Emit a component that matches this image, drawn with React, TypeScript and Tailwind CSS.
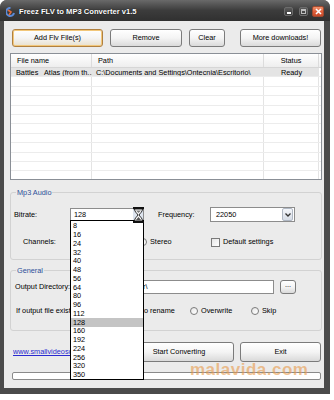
import React from "react";

const btn =
  "flex items-center justify-center rounded-[3px] border border-[#7b7b7b] bg-gradient-to-b from-[#ffffff] via-[#f4f4f4] to-[#dadada] text-black shrink-0";

const bitrates = ["8", "16", "24", "32", "40", "48", "56", "64", "80", "96", "112", "128", "160", "192", "224", "256", "320", "350"];

function Radio() {
  return <span className="w-[8px] h-[8px] rounded-full border border-[#7a7a7a] bg-gradient-to-br from-[#e8e8e8] to-white shrink-0" />;
}

function TitleBar() {
  return (
    <div className="h-[21px] flex items-center bg-gradient-to-b from-[#6a6a6a] via-[#3c3c3c] to-[#303030] shrink-0">
      <svg width="9" height="10" viewBox="0 0 9 10" className="ml-[6px] mt-[2px] shrink-0">
        <path d="M4.5 1 A4 4 0 1 0 8 6" fill="none" stroke="#5b8ad8" strokeWidth="2" />
        <path d="M2 3 L5 5 L3 8" fill="none" stroke="#e06a3a" strokeWidth="1.6" />
      </svg>
      <span className="ml-[4px] mt-[2px] text-white font-bold text-[7.6px] [text-shadow:0_0_1px_#000]">
        Freez FLV to MP3 Converter v1.5
      </span>
      <div className="ml-auto mr-[6px] mt-[1px] flex items-center">
        <div className="w-[9px] h-[9px] rounded-[2px] border border-[#6c6c6c] bg-gradient-to-b from-[#5a5a5a] to-[#3a3a3a] flex items-end justify-center pb-[1px]">
          <span className="w-[4px] h-[2px] bg-white" />
        </div>
        <div className="ml-[6px] w-[9px] h-[9px] rounded-[2px] border border-[#6c6c6c] bg-gradient-to-b from-[#5a5a5a] to-[#3a3a3a] flex items-center justify-center">
          <span className="w-[5px] h-[5px] border border-[#bdbdbd] border-t-2" />
        </div>
        <div className="ml-[4px] w-[12px] h-[11px] rounded-[2px] border border-[#a04a30] bg-gradient-to-b from-[#f0906a] via-[#e0603c] to-[#c84a2a] flex items-center justify-center">
          <svg width="7" height="7" viewBox="0 0 7 7">
            <path d="M1 1 L6 6 M6 1 L1 6" stroke="white" strokeWidth="1.6" />
          </svg>
        </div>
      </div>
    </div>
  );
}

function FileList() {
  const rows = Array.from({ length: 11 });
  return (
    <div className="mt-[6px] ml-[6px] w-[312px] h-[127px] border border-[#8a8f96] bg-white overflow-hidden flex flex-col shrink-0">
      <div className="h-[14px] flex items-stretch bg-gradient-to-b from-white to-[#eeeeee] border-b border-[#d6d6d6] shrink-0">
        <div className="w-[81px] flex items-center pl-[6px] border-r border-[#dcdcdc]">File name</div>
        <div className="w-[172px] flex items-center pl-[6px] border-r border-[#dcdcdc]">Path</div>
        <div className="w-[55px] flex items-center justify-center border-r border-[#dcdcdc]">Status</div>
        <div className="flex-1" />
      </div>
      <div className="h-[9.4px] flex items-stretch bg-[#e4e4e4] border-b border-[#ececec] shrink-0">
        <div className="w-[81px] flex items-center pl-[5px] whitespace-nowrap overflow-hidden">Battles&nbsp;&nbsp; Atlas (from th...</div>
        <div className="w-[172px] flex items-center pl-[4px] whitespace-nowrap overflow-hidden">C:\Documents and Settings\Ontecnia\Escritorio\</div>
        <div className="w-[55px] flex items-center justify-center">Ready</div>
        <div className="flex-1 bg-white" />
      </div>
      {rows.map((_, i) => (
        <div key={i} className="h-[9.4px] flex items-stretch border-b border-[#ececec] shrink-0">
          <div className="w-[81px] border-r border-[#e4e4e4]" />
          <div className="w-[172px] border-r border-[#e4e4e4]" />
          <div className="w-[55px] border-r border-[#e4e4e4]" />
          <div className="flex-1" />
        </div>
      ))}
    </div>
  );
}

export default function App() {
  return (
    <div className="w-[334px] h-[400px] bg-white font-['Liberation_Sans',Arial,sans-serif] text-[7.3px] leading-none text-black">
      <div className="w-[330px] h-[394px] rounded-t-[7px] bg-[#4b4b4b] flex flex-col overflow-hidden">
        <TitleBar />
        <div className="relative ml-[4px] w-[320px] h-[367px] bg-[#ebebeb] flex flex-col">
          {/* top buttons */}
          <div className="mt-[8px] ml-[8px] flex h-[18px] shrink-0">
            <button className={btn + " w-[91px] border-[#b08040] from-[#fffaf0] to-[#e8e0cc] shadow-[inset_0_0_0_1px_#f2c77a]"}>Add Flv File(s)</button>
            <button className={btn + " ml-[7px] w-[72px]"}>Remove</button>
            <button className={btn + " ml-[7px] w-[36px]"}>Clear</button>
            <button className={btn + " ml-[15px] w-[81px]"}>More downloads!</button>
          </div>

          <FileList />

          {/* Mp3 Audio group */}
          <div className="relative mt-[12px] ml-[6px] w-[312px] h-[68px] border border-[#d2d2d2] rounded-[3px] shrink-0">
            <span className="absolute left-[5px] top-[-5px] px-[1px] bg-[#ebebeb] text-[#2c4f98] leading-[9px]">Mp3 Audio</span>
            <div className="mt-[14px] h-[15px] flex items-center">
              <span className="ml-[3px] w-[56px]">Bitrate:</span>
              <div className="w-[74px] h-[13px] border border-[#8c8c8c] bg-white flex items-center">
                <span className="ml-[3px] flex-1">128</span>
                <span className="w-[10px] h-full bg-[#dde4ee]" />
              </div>
              <span className="ml-[14px] w-[52px]">Frequency:</span>
              <div className="w-[85px] h-[15px] border border-[#8c8c8c] bg-white flex items-center">
                <span className="ml-[5px] flex-1">22050</span>
                <span className="w-[11px] h-[13px] mr-[1px] rounded-[2px] border border-[#b0b8c4] bg-gradient-to-b from-[#f4f6fa] to-[#d6dce6] flex items-center justify-center">
                  <svg width="6" height="4" viewBox="0 0 6 4">
                    <path d="M0.5 0.5 L3 3 L5.5 0.5" fill="none" stroke="#333" strokeWidth="1.3" />
                  </svg>
                </span>
              </div>
            </div>
            <div className="mt-[14px] h-[12px] flex items-center">
              <span className="ml-[12px] w-[68px]">Channels:</span>
              <Radio />
              <span className="ml-[3px] w-[37px]">Mono</span>
              <Radio />
              <span className="ml-[3px] w-[61px]">Stereo</span>
              <span className="w-[9px] h-[9px] border border-[#7a7a7a] bg-gradient-to-br from-[#e6e6e6] to-white shrink-0" />
              <span className="ml-[3px]">Default settings</span>
            </div>
          </div>

          {/* General group */}
          <div className="relative mt-[10px] ml-[6px] w-[312px] h-[61px] border border-[#d2d2d2] rounded-[3px] shrink-0">
            <span className="absolute left-[5px] top-[-5px] px-[1px] bg-[#ebebeb] text-[#2c4f98] leading-[9px]">General</span>
            <div className="mt-[8px] h-[15px] flex items-center">
              <span className="ml-[4px] w-[79px] whitespace-nowrap">Output Directory:</span>
              <div className="w-[180px] h-[14px] border border-[#8c8c8c] bg-white flex items-center overflow-hidden">
                <span className="ml-[0.5px] whitespace-nowrap">C:\Temp\Folder\</span>
              </div>
              <button className={btn + " ml-[6px] w-[16px] h-[14px] rounded-[2px] pb-[3px]"}>...</button>
            </div>
            <div className="mt-[11px] h-[12px] flex items-center">
              <span className="ml-[5px] w-[105px]">If output file exists:</span>
              <Radio />
              <span className="ml-[4px] w-[57px]">Auto rename</span>
              <Radio />
              <span className="ml-[3px] w-[50px]">Overwrite</span>
              <Radio />
              <span className="ml-[3px]">Skip</span>
            </div>
          </div>

          {/* bottom */}
          <div className="mt-[11px] h-[20px] flex items-center shrink-0">
            <span className="ml-[9px] w-[111px] text-[#2a2ad0] underline whitespace-nowrap overflow-hidden">www.smallvideosoft.com</span>
            <button className={btn + " w-[110px] h-[20px]"}>Start Converting</button>
            <button className={btn + " ml-[6px] w-[81px] h-[20px]"}>Exit</button>
          </div>
          <div className="mt-[10px] ml-[8px] w-[309px] h-[8px] rounded-[2px] border border-[#8a8a8a] bg-white shrink-0" />

          {/* watermark */}
          <span className="absolute left-[186px] top-[340px] text-[17px] font-bold tracking-[0.5px] text-[#e89a4a]/60 leading-none pointer-events-none">
            malavida.com
          </span>

          {/* dropdown list */}
          <div className="absolute left-[66px] top-[199px] w-[74px] h-[160px] border border-black bg-white flex flex-col pt-[0.6px]">
            {bitrates.map((b) => (
              <div
                key={b}
                className={"h-[8.76px] flex items-center pl-[2px] " + (b === "128" ? "bg-[#c4c4c4]" : "")}
              >
                {b}
              </div>
            ))}
          </div>

          {/* hourglass cursor */}
          <svg className="absolute left-[129px] top-[186px]" width="11" height="16" viewBox="0 0 11 16">
            <rect x="0" y="0" width="11" height="2.2" fill="#111" />
            <rect x="0" y="13.8" width="11" height="2.2" fill="#111" />
            <path d="M1.5 2 L9.5 2 C9.5 5 6.5 6.6 6 8 C6.5 9.4 9.5 11 9.5 14 L1.5 14 C1.5 11 4.5 9.4 5 8 C4.5 6.6 1.5 5 1.5 2 Z" fill="white" stroke="#111" strokeWidth="0.9" />
            <path d="M2.5 13.4 L5.5 10 L8.5 13.4 Z" fill="#555" />
            <path d="M3 3.5 L8 3.5 L5.5 6 Z" fill="#777" />
          </svg>
        </div>
      </div>
    </div>
  );
}
